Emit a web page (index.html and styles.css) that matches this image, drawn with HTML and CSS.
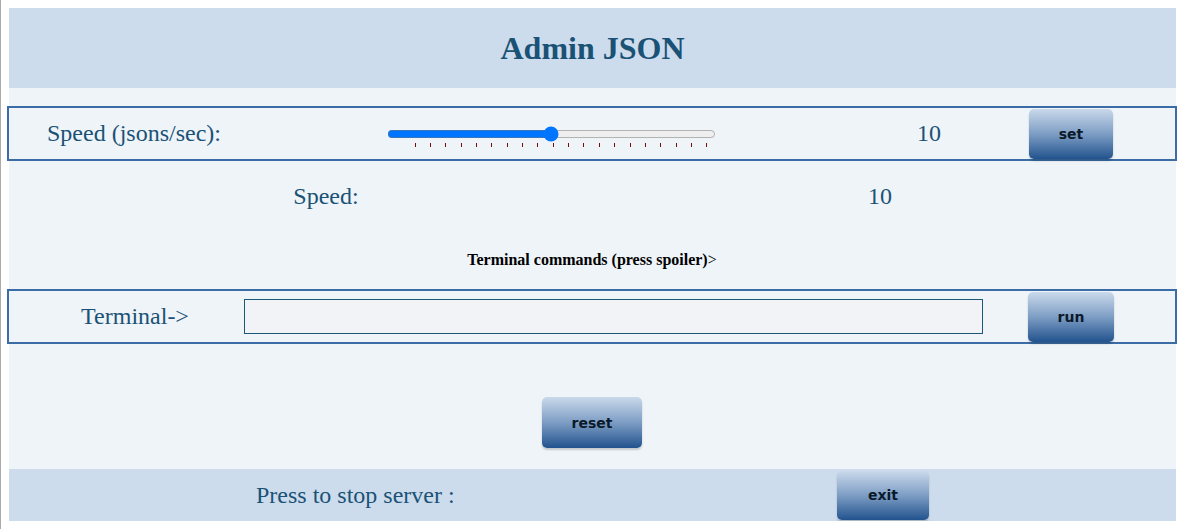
FILE: index.html
```html
<!DOCTYPE html>
<html lang="en">
<head>
<meta charset="utf-8">
<title>Admin JSON</title>
<link rel="stylesheet" href="styles.css">
</head>
<body>
<div class="page">
  <header class="header">
    <h1 class="title">Admin JSON</h1>
  </header>
  <main class="main">
    <div class="box speed-box">
      <div class="cell label">Speed (jsons/sec):</div>
      <div class="cell slider-cell">
        <div class="slider">
          <input class="range" type="range" min="0" max="20" value="10">
          <div class="ticks">
            <span></span><span></span><span></span><span></span><span></span>
            <span></span><span></span><span></span><span></span><span></span>
            <span></span><span></span><span></span><span></span><span></span>
            <span></span><span></span><span></span><span></span><span></span>
          </div>
        </div>
      </div>
      <div class="cell label">10</div>
      <div class="cell"><button class="btn">set</button></div>
    </div>
    <div class="speed-info">
      <div class="cell label">Speed:</div>
      <div class="cell label">10</div>
    </div>
    <div class="spoiler"><b>Terminal commands (press spoiler)</b>&gt;</div>
    <div class="box term-box">
      <div class="cell label">Terminal-&gt;</div>
      <div class="cell input-cell"><input class="term-input" type="text"></div>
      <div class="cell"><button class="btn">run</button></div>
    </div>
    <div class="reset-row"><button class="btn reset">reset</button></div>
  </main>
  <footer class="footer">
    <div class="label footer-text">Press to stop server :</div>
    <button class="btn exit">exit</button>
  </footer>
</div>
</body>
</html>
```

FILE: styles.css
```css
html {
  border-left: 1px solid #ababab;
  background: #ffffff;
  overflow: hidden;
}
body {
  margin: 8px 0 8px 6px;
  font-family: "Liberation Serif", "Times New Roman", serif;
}
.page {
  width: 1170px;
}
.header {
  width: 1167px;
  height: 80px;
  margin-left: 2px;
  background: #cddcec;
  display: flex;
  align-items: center;
  justify-content: center;
}
.title {
  margin: 0;
  font-size: 32px;
  font-weight: bold;
  color: #1a5276;
}
.main {
  width: 1170px;
  padding-top: 18px;
  background: linear-gradient(to right, transparent 2px, #eff4f9 2px, #eff4f9 1169px, transparent 1169px);
}
.label {
  font-size: 24px;
  color: #1a5276;
}
.box {
  box-sizing: border-box;
  width: 1170px;
  height: 55px;
  border: 2px solid #3b6ca6;
  display: grid;
  align-items: center;
}
.cell {
  display: flex;
  justify-content: center;
  align-items: center;
}
.speed-box {
  grid-template-columns: 250px 584px 172px 112px 1fr;
}
.slider {
  display: flex;
  flex-direction: column;
  padding-top: 5px;
}
.range {
  width: 329px;
  height: 16px;
  margin: 0;
  accent-color: #0075ff;
}
.ticks {
  display: flex;
  justify-content: space-between;
  width: 293px;
  margin-left: 28px;
  margin-top: 1px;
  height: 4px;
}
.ticks span {
  width: 1px;
  height: 4px;
  background: #7a0a0a;
}
.speed-info {
  height: 70px;
  display: grid;
  grid-template-columns: 638px 470px;
  align-items: center;
}
.spoiler {
  height: 58px;
  display: flex;
  align-items: center;
  justify-content: center;
  font-size: 16px;
  color: #000000;
}
.term-box {
  grid-template-columns: 252px 724px 172px 1fr;
}
.input-cell {
  justify-content: flex-start;
}
.term-input {
  box-sizing: border-box;
  width: 739px;
  height: 35px;
  margin: 0 0 0 -17px;
  border: 1px solid #1d5877;
  background: #f2f3f7;
  padding: 0 4px;
}
.btn {
  box-sizing: border-box;
  height: 50px;
  padding: 0 30px;
  border: none;
  border-radius: 5px;
  background: linear-gradient(to bottom, #cad9eb 0%, #7d9dc4 50%, #22538e 100%);
  box-shadow: 0 2px 2px rgba(0, 0, 0, 0.18);
  font-family: "DejaVu Sans", Verdana, sans-serif;
  font-weight: bold;
  font-size: 14px;
  color: #0b1a2a;
}
.reset-row {
  display: flex;
  justify-content: center;
  padding: 53px 0 21px;
}
.reset {
  height: 51px;
  width: 100px;
  padding: 0;
}
.footer {
  width: 1167px;
  height: 52px;
  margin-left: 2px;
  background: #cddcec;
  display: grid;
  grid-template-columns: 828px 92px;
  align-items: center;
}
.footer-text {
  padding-left: 247px;
}
.exit {
  height: 49px;
  padding: 0;
  width: 92px;
}
```
